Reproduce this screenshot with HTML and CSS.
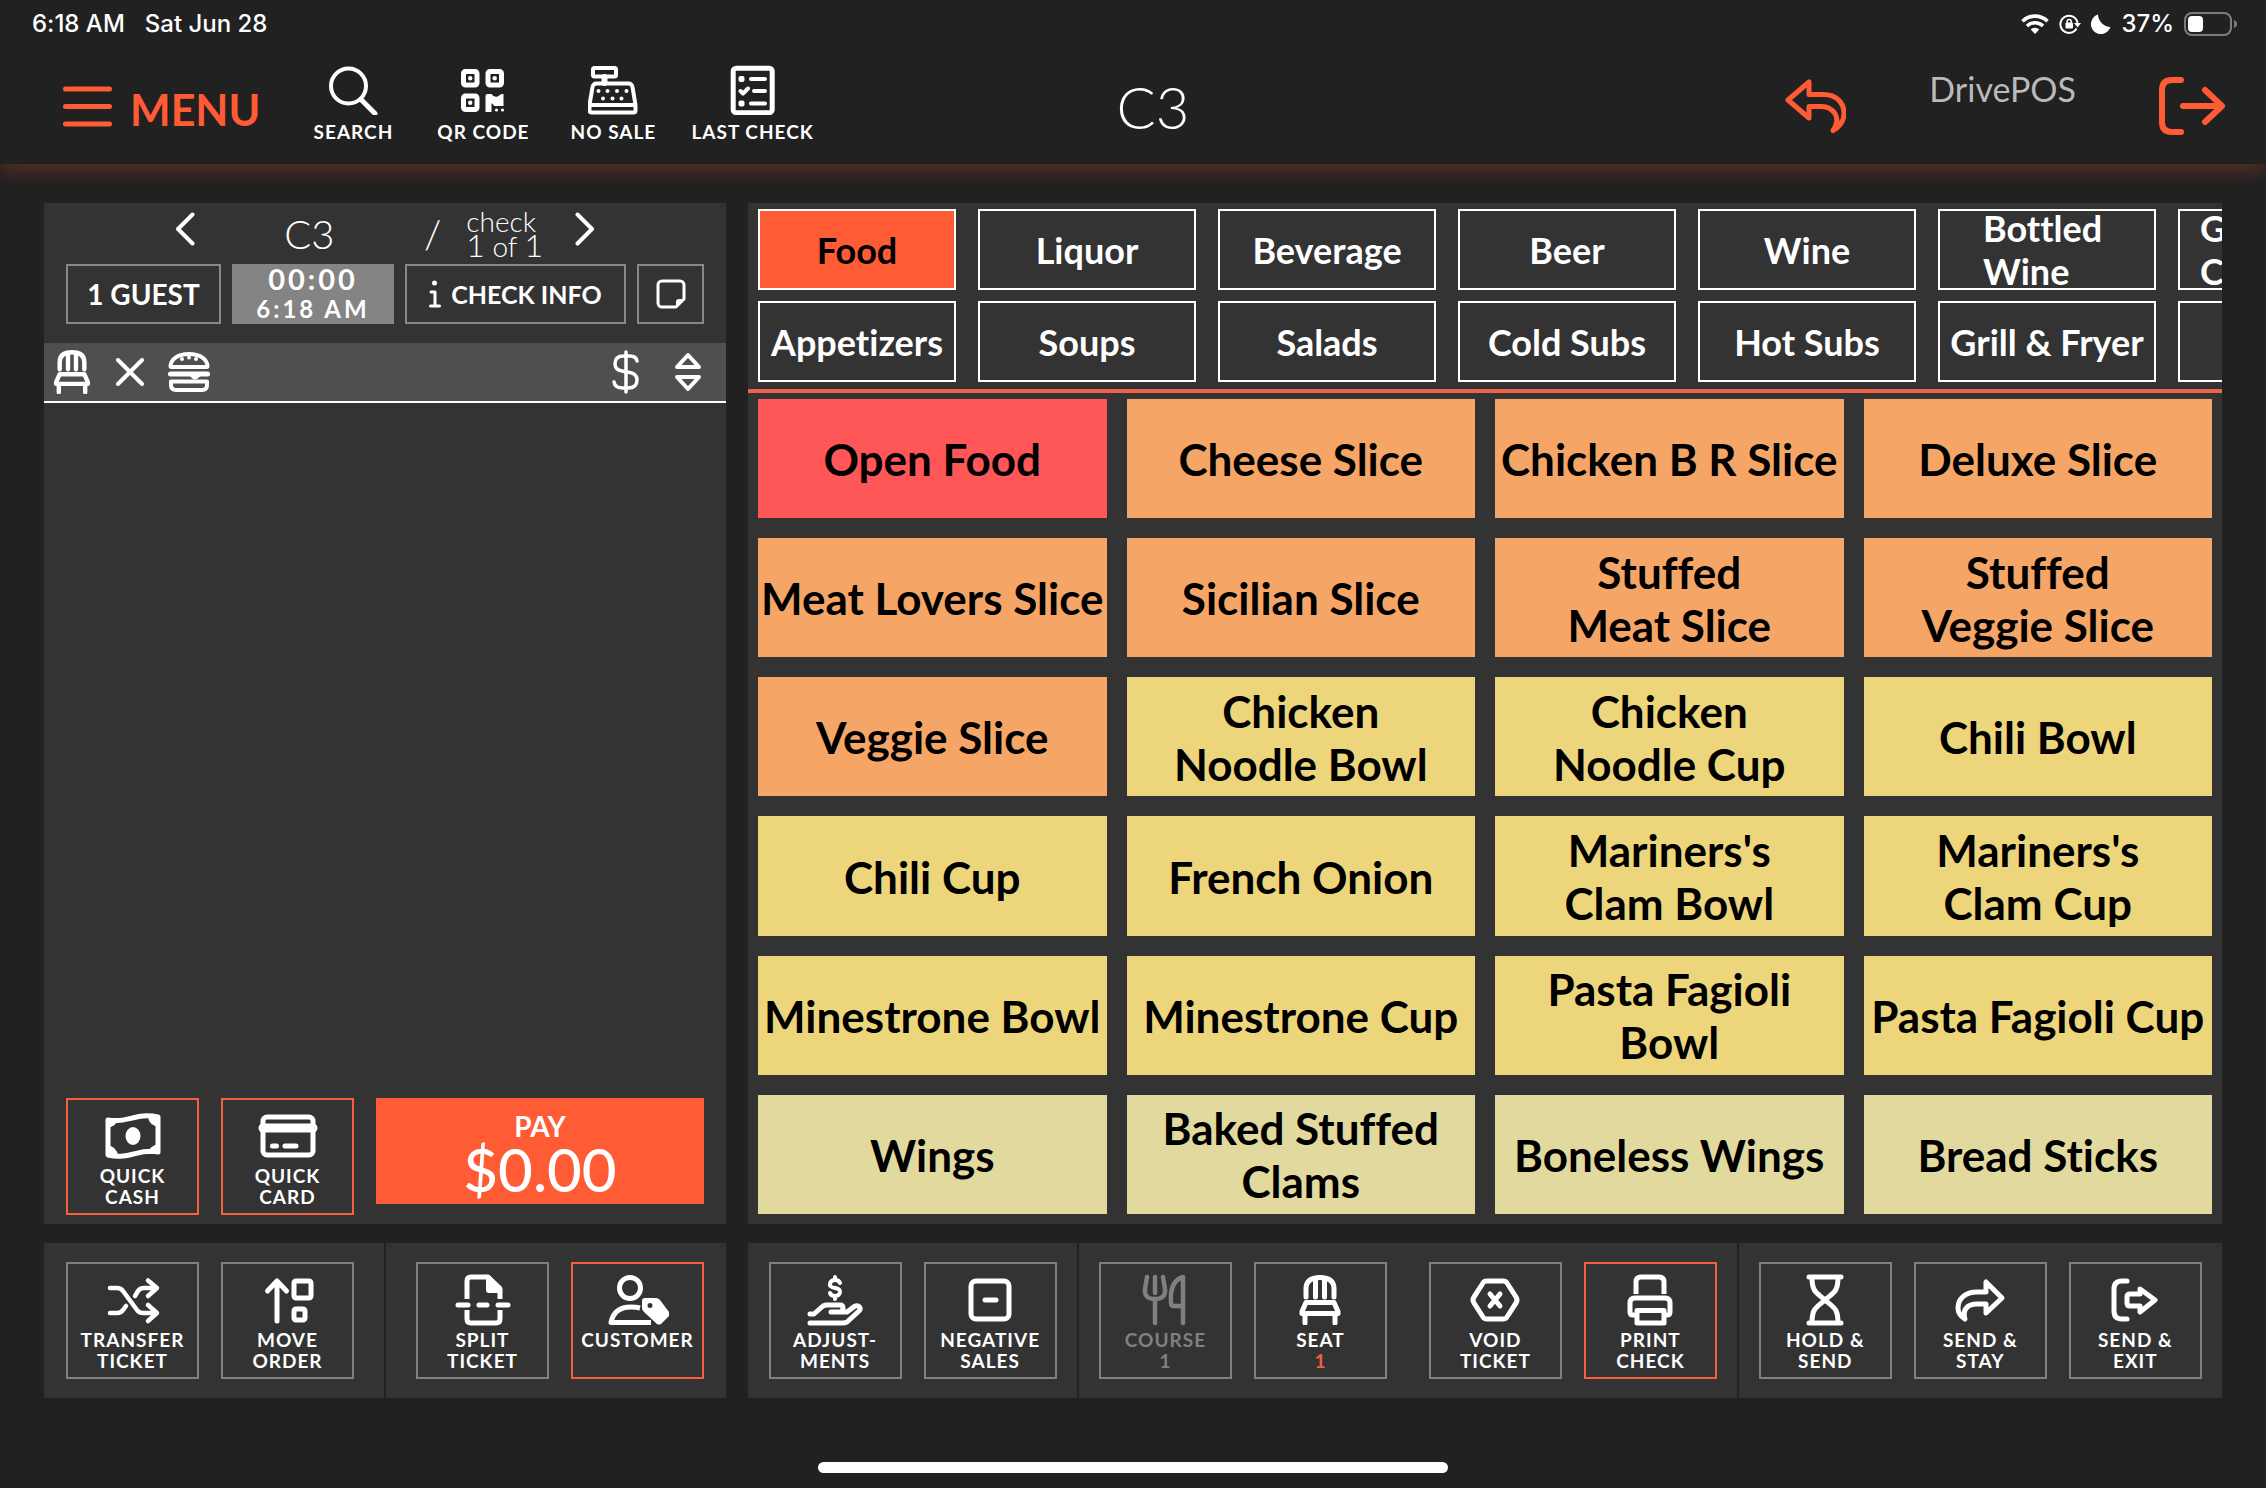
FILE: index.html
```html
<!DOCTYPE html>
<html lang="en">
<head>
  <meta charset="UTF-8">
  <meta name="viewport" content="width=device-width, initial-scale=1">
  <title>DrivePOS - C3</title>
  <link rel="stylesheet" href="styles.css">
</head>
<body>

  <!-- Shared icons -->
  <svg class="sprite" aria-hidden="true">
    <symbol id="icon-chair" viewBox="0 0 42 50">
      <path d="M7 22V14C7 6 12 2.500 21 2.500S35 6 35 14v8M16.500 4v18M25.500 4v18M7 27.500h28l4 9v2H3v-2zM6 38.500V48M36 38.500V48"/>
    </symbol>
  </svg>

  <div class="status-bar">
    <div class="status-left">
      <span>6:18 AM</span>
      <span>Sat Jun 28</span>
    </div>
    <div class="status-right">
      <svg width="28" height="20" viewBox="0 0 28 20" fill="none" stroke="#fff" stroke-width="3.600">
        <path d="M1.500 7.200a18 18 0 0 1 25 0M6 12a11.500 11.500 0 0 1 16 0"/>
        <path d="M14 20l-4.200-4.500a6 6 0 0 1 8.400 0z" fill="#fff" stroke="none"/>
      </svg>
      <svg width="22" height="20" viewBox="0 0 22 20" fill="none" stroke="#fff" stroke-width="2">
        <path d="M17.500 14.500A8.600 8.600 0 1 1 18.500 9"/>
        <path d="M15 9h7l-3.500 4.500z" fill="#fff" stroke="none"/>
        <rect x="6.500" y="8.500" width="7.500" height="6" rx="1" fill="#fff" stroke="none"/>
        <path d="M8.200 9V7.500a2 2 0 0 1 4 0V9" stroke-width="1.500"/>
      </svg>
      <svg width="20" height="20" viewBox="0 0 20 20" fill="#fff">
        <path d="M7 .5A13 13 0 0 0 19.500 13 10 10 0 1 1 7 .5z"/>
      </svg>
      <span>37%</span>
      <svg width="54" height="24" viewBox="0 0 54 24" fill="none">
        <rect x="1" y="1" width="46" height="22" rx="7" stroke="#7d7d7d" stroke-width="2"/>
        <rect x="4" y="4" width="15" height="16" rx="4" fill="#fff"/>
        <path d="M50 8c4 1.500 4 6.500 0 8z" fill="#7d7d7d"/>
      </svg>
    </div>
  </div>

  <header class="top-bar">
    <nav class="top-left">
      <button class="menu-btn">
        <svg width="49" height="41" viewBox="0 0 49 41" stroke="#ff5c35" stroke-width="5" stroke-linecap="round">
          <path d="M2.500 3h44M2.500 20.500h44M2.500 38h44"/>
        </svg>
        <span>MENU</span>
      </button>
      <button class="nav-btn">
        <svg class="icon" width="50" height="50" viewBox="0 0 50 50">
          <circle cx="20.500" cy="21" r="17.500" stroke-width="4"/><path d="M33 34.500l14 14" stroke-width="5"/>
        </svg>
        SEARCH
      </button>
      <button class="nav-btn">
        <svg class="icon" width="50" height="50" viewBox="0 0 50 50">
          <rect x="5.500" y="6.500" width="13.500" height="13.500" rx="2"/>
          <rect x="30" y="6.500" width="13.500" height="13.500" rx="2"/>
          <rect x="5.500" y="31" width="13.500" height="13.500" rx="2"/>
          <g class="solid">
            <circle cx="12.200" cy="13.200" r="2.200"/><circle cx="36.700" cy="13.200" r="2.200"/><circle cx="12.200" cy="37.700" r="2.200"/>
            <path d="M27.500 31a2 2 0 0 1 2-2h4q2 3.500 6 2.500l4-2.500h2v12h-9l-3-3v9h-6z"/>
            <circle cx="38.500" cy="45" r="1.600"/><circle cx="44.500" cy="45" r="1.600"/>
          </g>
        </svg>
        QR CODE
      </button>
      <button class="nav-btn">
        <svg class="icon medium" width="50" height="50" viewBox="0 0 50 50">
          <rect x="5" y="3" width="23" height="8.500" rx="1.500"/>
          <path d="M16.500 12v6" stroke-width="6"/>
          <path d="M8.500 18.500h32a4 4 0 0 1 4 3.500l3 18v5.500a2 2 0 0 1-2 2h-42a2 2 0 0 1-2-2V40l3-18a4 4 0 0 1 4-3.500zM2 40h45"/>
          <g class="solid">
            <circle cx="10.500" cy="26" r="2"/><circle cx="19.500" cy="26" r="2"/><circle cx="29" cy="26" r="2"/><circle cx="38.500" cy="26" r="2"/>
            <circle cx="15" cy="33.500" r="2"/><circle cx="24.500" cy="33.500" r="2"/><circle cx="33.500" cy="33.500" r="2"/>
          </g>
        </svg>
        NO SALE
      </button>
      <button class="nav-btn">
        <svg class="icon" width="50" height="50" viewBox="0 0 50 50">
          <rect x="5.200" y="3.200" width="39" height="44.500" rx="3"/>
          <path d="M23 14h14M26 26h11M23 38.500h14M12.500 26l2.500 2.500 5-5" stroke-width="4"/>
          <rect class="solid" x="10.500" y="11" width="6" height="6" rx="2"/>
          <rect class="solid" x="10.500" y="35.500" width="6" height="6" rx="2"/>
        </svg>
        LAST CHECK
      </button>
    </nav>

    <h1 class="table-title">C3</h1>

    <div class="top-right">
      <button class="plain-btn" aria-label="Undo">
        <svg width="61" height="54" viewBox="0 0 61 54" fill="none" stroke="#ff5c35" stroke-width="5" stroke-linejoin="round" stroke-linecap="round">
          <path d="M3 21L24 3v12.500h15c12 0 20 8 20 19 0 7-4 13-11 17 4-6 5-12 2-17-3-4-7-7-13-7H24V39z"/>
        </svg>
      </button>
      <span class="brand">DrivePOS</span>
      <button class="plain-btn" aria-label="Exit">
        <svg width="66" height="58" viewBox="0 0 66 58" fill="none" stroke="#ff5c35" stroke-width="6" stroke-linejoin="round" stroke-linecap="round">
          <path d="M22 3H13Q3 3 3 13v32q0 10 10 10h9M24 29h38M46 13l17 16-17 16"/>
        </svg>
      </button>
    </div>
  </header>

  <main class="workspace">

    <!-- Current check -->
    <section class="panel check-panel">
      <div class="check-nav">
        <button class="plain-btn chevron" aria-label="Previous check">
          <svg width="20" height="34" viewBox="0 0 20 34" class="icon"><path d="M17.500 2.500L3 17l14.500 14.500" stroke-width="4"/></svg>
        </button>
        <span class="check-name">C3</span>
        <span class="slash">/</span>
        <span class="check-count">check<br><b>1</b> of <b>1</b></span>
        <button class="plain-btn chevron" aria-label="Next check">
          <svg width="20" height="34" viewBox="0 0 20 34" class="icon"><path d="M2.500 2.500L17 17 2.500 31.500" stroke-width="4"/></svg>
        </button>
      </div>

      <div class="check-actions">
        <button class="outline-btn guests">1 GUEST</button>
        <button class="outline-btn timer"><span class="elapsed">00:00</span><span class="opened">6:18 AM</span></button>
        <button class="outline-btn info">
          <svg width="12" height="28" viewBox="0 0 12 28" class="icon"><path d="M2 12h4v14M1.500 26h9" stroke-width="3"/><circle class="solid" cx="5.500" cy="3" r="2.500"/></svg>
          CHECK INFO
        </button>
        <button class="outline-btn note" aria-label="Note">
          <svg width="30" height="30" viewBox="0 0 30 30" class="icon"><path d="M6 2h18a4 4 0 0 1 4 4v14l-8 8H6a4 4 0 0 1-4-4V6a4 4 0 0 1 4-4z" stroke-width="3"/><path class="solid" d="M20 29v-6q0-3 3-3h6z"/></svg>
        </button>
      </div>

      <div class="order-head">
        <svg width="40" height="44" class="icon"><use href="#icon-chair"/></svg>
        <svg width="28" height="28" viewBox="0 0 28 28" class="icon medium"><path d="M2 2l24 24M26 2L2 26"/></svg>
        <svg width="42" height="40" viewBox="0 0 42 40" class="icon medium">
          <path d="M2.500 14C3 7 10 2 21 2s18 5 18.500 12q0 1-1 1h-35q-1 0-1-1zM3 29.500h36V33q0 5-5 5H8q-5 0-5-5z"/>
          <path d="M2.500 22h37" stroke-width="5"/>
          <path class="solid" d="M19 22h16l-6 5q-2 1-4 0z"/>
          <g class="solid"><circle cx="14" cy="7" r="2"/><circle cx="21" cy="5.500" r="2"/><circle cx="28" cy="7" r="2"/></g>
        </svg>
        <svg width="28" height="44" viewBox="0 0 28 44" class="icon push"><path d="M14 2v40M25 11q-1-5-7-5h-6Q3 6 3 13.500 3 20 10 21l8 1.500q7 1.500 7 7.500 0 8-9 8h-5q-8 0-9-6" stroke-width="3.500"/></svg>
        <svg width="28" height="40" viewBox="0 0 28 40" class="icon"><path d="M14 3l11 12H3zM14 37L3 25h22z" stroke-width="4"/></svg>
      </div>

      <div class="order-list"></div>

      <div class="pay-row">
        <button class="tool active">
          <svg class="icon" width="62" height="54" viewBox="0 0 62 54">
            <path d="M6 11c19 4 28-8 50-3v35c-19-4-28 8-50 3z"/>
            <g class="solid">
              <ellipse cx="31" cy="27" rx="7.500" ry="9"/>
              <path d="M4 9h12q-1 9-12 10zM58 8H46q1 9 12 10zM4 47h12q-1-10-12-11zM58 45H46q1-9 12-10z"/>
            </g>
          </svg>
          <span class="label">QUICK<br>CASH</span>
        </button>
        <button class="tool active">
          <svg class="icon" width="62" height="54" viewBox="0 0 62 54">
            <rect x="6" y="8" width="50" height="38" rx="4"/>
            <path d="M6 19h50" stroke-width="9"/>
            <path d="M15.500 37h4M28 37h11"/>
          </svg>
          <span class="label">QUICK<br>CARD</span>
        </button>
        <button class="pay-btn"><span>PAY</span><span class="amount">$0.00</span></button>
      </div>
    </section>

    <!-- Menu -->
    <section class="panel menu-panel">
      <div class="categories">
        <button class="cat selected">Food</button>
        <button class="cat">Liquor</button>
        <button class="cat">Beverage</button>
        <button class="cat">Beer</button>
        <button class="cat">Wine</button>
        <button class="cat two-line">Bottled 
Wine</button>
        <button class="cat two-line cut">G
C</button>
        <button class="cat">Appetizers</button>
        <button class="cat">Soups</button>
        <button class="cat">Salads</button>
        <button class="cat">Cold Subs</button>
        <button class="cat">Hot Subs</button>
        <button class="cat">Grill &amp; Fryer</button>
        <button class="cat" aria-label="Next category"></button>
      </div>

      <div class="items">
        <button class="item red">Open Food</button>
        <button class="item orange">Cheese Slice</button>
        <button class="item orange">Chicken B R Slice</button>
        <button class="item orange">Deluxe Slice</button>
        <button class="item orange">Meat Lovers Slice</button>
        <button class="item orange">Sicilian Slice</button>
        <button class="item orange">Stuffed<br>Meat Slice</button>
        <button class="item orange">Stuffed<br>Veggie Slice</button>
        <button class="item orange">Veggie Slice</button>
        <button class="item yellow">Chicken<br>Noodle Bowl</button>
        <button class="item yellow">Chicken<br>Noodle Cup</button>
        <button class="item yellow">Chili Bowl</button>
        <button class="item yellow">Chili Cup</button>
        <button class="item yellow">French Onion</button>
        <button class="item yellow">Mariners's<br>Clam Bowl</button>
        <button class="item yellow">Mariners's<br>Clam Cup</button>
        <button class="item yellow">Minestrone Bowl</button>
        <button class="item yellow">Minestrone Cup</button>
        <button class="item yellow">Pasta Fagioli<br>Bowl</button>
        <button class="item yellow">Pasta Fagioli Cup</button>
        <button class="item khaki">Wings</button>
        <button class="item khaki">Baked Stuffed<br>Clams</button>
        <button class="item khaki">Boneless Wings</button>
        <button class="item khaki">Bread Sticks</button>
      </div>
    </section>

    <!-- Ticket tools -->
    <div class="tools ticket-tools">
      <div class="tool-group">
        <button class="tool">
          <svg class="icon" width="62" height="54" viewBox="0 0 62 54">
            <path d="M8 15h7q4 0 6 3l14 19q2 3 6 3h11M8 40h7q4 0 6-3l3-4M33 23l3-5q2-3 6-3h10M46 7.500l9 7.500-9 8M46 32l9 8-9 8" stroke-width="4.500"/>
          </svg>
          <span class="label">TRANSFER<br>TICKET</span>
        </button>
        <button class="tool">
          <svg class="icon" width="62" height="54" viewBox="0 0 62 54">
            <path d="M20 48V9M10.500 18L20 8l9.500 10"/><rect x="37" y="8" width="17" height="17" rx="2"/><rect x="37" y="36" width="11" height="11" rx="2"/>
          </svg>
          <span class="label">MOVE<br>ORDER</span>
        </button>
      </div>
      <div class="tool-group">
        <button class="tool">
          <svg class="icon" width="62" height="54" viewBox="0 0 62 54">
            <path class="butt" d="M15 26V8q0-4 4-4h17l12 12v10M15 37v9q0 4 4 4h25q4 0 4-4v-9"/>
            <path class="solid" d="M34 3h4l12 11v6H37q-3 0-3-3z"/>
            <path d="M6 32h10M27 32h8M46 32h10"/>
          </svg>
          <span class="label">SPLIT<br>TICKET</span>
        </button>
        <button class="tool active">
          <svg class="icon" width="62" height="54" viewBox="0 0 62 54">
            <circle cx="23" cy="15" r="10.500"/>
            <path class="butt" d="M33 35q-4-1-9-1Q7 34 4 49.500h40"/>
            <path fill="#fff" fill-rule="evenodd" stroke="none" d="M38 25h11q2 0 4 2l9 12q1 2 0 4l-8 8q-2 1-4 0L37 39q-2-2-2-4v-7q0-3 3-3zm5 5a2.500 2.500 0 1 0 0 5 2.500 2.500 0 0 0 0-5z"/>
          </svg>
          <span class="label">CUSTOMER</span>
        </button>
      </div>
    </div>

    <!-- Order tools -->
    <div class="tools order-tools">
      <div class="tool-group">
        <button class="tool">
          <svg class="icon" width="62" height="54" viewBox="0 0 62 54">
            <path d="M36 10q-1-3-5-3t-5 3.500 5 4.500 5 4.500-5 3.500-5-3M31 4v3M31 23v3" stroke-width="4"/>
            <path d="M6 41h4l9-8q2-1 4-1h13q3 0 3 3t-3 4h-9M36 39h7l8-6q3-1 4.500 1t-.500 4L43 49q-2 1-4 1H6"/>
          </svg>
          <span class="label">ADJUST-<br>MENTS</span>
        </button>
        <button class="tool">
          <svg class="icon" width="62" height="54" viewBox="0 0 62 54">
            <rect x="12" y="8" width="38" height="38" rx="5"/><path d="M26 27h11"/>
          </svg>
          <span class="label">NEGATIVE<br>SALES</span>
        </button>
      </div>
      <div class="tool-group wide">
        <div class="pair">
          <button class="tool" disabled>
            <svg class="icon" width="62" height="54" viewBox="0 0 62 54">
              <path d="M13 4l-2 12q-1 10 10 10t10-10L29 4M21 4v16M21 27v23M49 50V4C39 7 36 17 37 30q0 3 3 3h9" stroke-width="4.500"/>
            </svg>
            <span class="label">COURSE<br>1</span>
          </button>
          <button class="tool">
            <svg class="icon chair" width="62" height="54" viewBox="0 0 62 54"><use href="#icon-chair" x="10" y="2" width="42" height="50"/></svg>
            <span class="label">SEAT<br><span class="accent">1</span></span>
          </button>
        </div>
        <div class="pair">
          <button class="tool">
            <svg class="icon" width="62" height="54" viewBox="0 0 62 54">
              <path d="M23 8h16q3 0 4 2l9 14q2 3 0 6l-9 14q-1 2-4 2H23q-3 0-4-2l-9-14q-2-3 0-6l9-14q1-2 4-2zM26 21l10 12M36 21L26 33"/>
            </svg>
            <span class="label">VOID<br>TICKET</span>
          </button>
          <button class="tool active">
            <svg class="icon" width="62" height="54" viewBox="0 0 62 54">
              <path class="butt" d="M17 21V9q0-5 5-5h18q5 0 5 5v12"/>
              <path d="M17 42h-3q-3 0-3-3V30q0-5 5-5h30q5 0 5 5v9q0 3-3 3h-3M18 37.500h27V50H18z"/>
            </svg>
            <span class="label">PRINT<br>CHECK</span>
          </button>
        </div>
      </div>
      <div class="tool-group">
        <button class="tool">
          <svg class="icon" width="62" height="54" viewBox="0 0 62 54">
            <path d="M15 4h32M15 50h32M18 4c0 15 4 15 13 23 9-8 13-8 13-23M18 50c0-15 4-15 13-23 9 8 13 8 13 23"/>
          </svg>
          <span class="label">HOLD &amp;<br>SEND</span>
        </button>
        <button class="tool">
          <svg class="icon" width="62" height="54" viewBox="0 0 62 54">
            <path d="M53 25L37 9v10h-9C16 19 9 26 9 35c0 5 2 8 7 11-3-10 3-15 12-15h9v9z"/>
          </svg>
          <span class="label">SEND &amp;<br>STAY</span>
        </button>
        <button class="tool">
          <svg class="icon" width="62" height="54" viewBox="0 0 62 54">
            <path d="M23 8h-5q-8 0-8 8v22q0 8 8 8h5M26 21h10v-5l15 11-15 12v-6H26q-3 0-3-3v-6q0-3 3-3z"/>
          </svg>
          <span class="label">SEND &amp;<br>EXIT</span>
        </button>
      </div>
    </div>
  </main>

  <div class="home-bar"></div>

</body>
</html>
```
FILE: styles.css
```css
* {
  box-sizing: border-box;
}

body {
  margin: 0;
  min-height: 100vh;
  display: flex;
  flex-direction: column;
  background: #212121;
  color: #fff;
  font-family: Lato, "Open Sans", sans-serif;
  font-variant-ligatures: none;
}

button {
  font-family: inherit;
  font-variant-ligatures: inherit;
  color: inherit;
  background: none;
  border: none;
  border-radius: 0;
  padding: 0;
  margin: 0;
  cursor: pointer;
}

svg {
  display: block;
  flex-shrink: 0;
}

.sprite {
  position: absolute;
  width: 0;
  height: 0;
}

.icon {
  fill: none;
  stroke: currentColor;
  stroke-width: 5px;
  stroke-linecap: round;
  stroke-linejoin: round;
}

.icon.medium { stroke-width: 4px; }
.icon .butt { stroke-linecap: butt; }

.icon .solid,
.icon .solid * {
  fill: currentColor;
  stroke: none;
}

/* iPad status bar */
.status-bar {
  display: flex;
  justify-content: space-between;
  height: 48px;
  padding: 0 28px 0 32px;
  font-family: Inter, sans-serif;
  font-size: 24px;
  font-weight: 500;
  line-height: 48px;
}

.status-left {
  display: flex;
  gap: 20px;
}

.status-right {
  display: flex;
  align-items: center;
  gap: 10px;
}

/* Header */
.top-bar {
  display: grid;
  grid-template-columns: 1fr auto 1fr;
  align-items: center;
  height: 116px;
  padding: 0 23px 0 63px;
  box-shadow: 0 4px 20px rgba(255, 92, 53, 0.3);
  clip-path: inset(0 0 -40px 0);
}

.top-left {
  display: flex;
  align-items: center;
}

.menu-btn {
  display: flex;
  align-items: center;
  gap: 18px;
  margin-right: 28px;
  font-size: 43px;
  font-weight: 700;
  color: #ff5c35;
}

.menu-btn span {
  padding-top: 6px;
}

.nav-btn {
  display: flex;
  flex-direction: column;
  align-items: center;
  gap: 6px;
  min-width: 130px;
  padding: 0 13px 6px;
  font-size: 19px;
  font-weight: 700;
  line-height: 21px;
  letter-spacing: 1px;
  white-space: nowrap;
}

.table-title {
  margin: 0;
  font-size: 58px;
  font-weight: 300;
}

.top-right {
  display: flex;
  align-items: center;
  justify-content: flex-end;
  gap: 83px;
  padding-right: 18px;
}

.brand {
  padding-bottom: 36px;
  font-size: 34px;
  font-weight: 400;
  color: #bababa;
}

/* Workspace */
.workspace {
  flex: 1;
  display: grid;
  grid-template-columns: minmax(0, 682fr) minmax(0, 1474fr);
  grid-template-rows: 1fr auto;
  gap: 19px 22px;
  padding: 39px 44px 0;
}

.panel {
  display: flex;
  flex-direction: column;
  background: #333;
}

/* Check panel */
.check-nav {
  display: flex;
  align-items: center;
  justify-content: center;
  height: 61px;
  font-weight: 300;
}

.chevron {
  padding-bottom: 10px;
}

.check-name {
  width: 229px;
  font-size: 40px;
  text-align: center;
}

.slash {
  font-size: 40px;
}

.check-count {
  margin: 0 32px 0 25px;
  font-size: 28px;
  line-height: 23px;
}

.check-count b {
  font-size: 32px;
  font-weight: 300;
}

.check-actions {
  display: grid;
  grid-template-columns: 155fr 162fr 221fr 67fr;
  gap: 11px;
  padding: 0 22px;
}

.outline-btn {
  display: flex;
  align-items: center;
  justify-content: center;
  height: 60px;
  border: 2px solid #888;
  font-weight: 700;
  white-space: nowrap;
}

.guests {
  font-size: 28px;
}

.timer {
  flex-direction: column;
  background: #848484;
  border-color: #848484;
  letter-spacing: 3px;
  line-height: 30px;
}

.elapsed {
  font-size: 29px;
}

.opened {
  font-size: 24px;
}

.info {
  gap: 10px;
  font-size: 25px;
}

.order-head {
  display: flex;
  align-items: center;
  gap: 24px;
  height: 60px;
  margin-top: 19px;
  padding: 0 24px 0 8px;
  background: #4f4f4f;
  border-bottom: 2px solid #fff;
}

.push {
  margin-left: auto;
  margin-right: 10px;
}

.order-list {
  flex: 1;
}

.pay-row {
  display: flex;
  align-items: flex-start;
  gap: 22px;
  padding: 0 22px 9px;
}

.pay-btn {
  flex: 1;
  height: 106px;
  padding-top: 2px;
  background: #ff5c35;
  font-size: 28px;
  font-weight: 700;
  line-height: 34px;
}

.pay-btn span {
  display: block;
}

.pay-btn .amount {
  font-size: 60px;
  font-weight: 500;
  line-height: 52px;
}

/* Menu panel */
.categories {
  display: grid;
  grid-template-columns: 198px repeat(6, 218px);
  grid-auto-rows: 81px;
  gap: 11px 22px;
  padding: 6px 0 7px 10px;
  border-bottom: 4px solid #f0624a;
  overflow: hidden;
}

.cat {
  padding-top: 2px;
  border: 2px solid #fff;
  font-size: 36px;
  font-weight: 700;
  line-height: 43px;
  white-space: nowrap;
}

.cat.selected {
  background: #ff5c35;
  color: #000;
}

.cat.two-line {
  display: flex;
  align-items: center;
  justify-content: center;
  padding-top: 0;
  text-align: left;
  white-space: pre;
}

.cat.cut {
  justify-content: flex-start;
  padding-left: 20px;
}

.items {
  flex: 1;
  display: grid;
  grid-template-columns: repeat(4, minmax(0, 1fr));
  grid-auto-rows: 1fr;
  gap: 20px;
  padding: 6px 10px 10px;
}

.item {
  padding-top: 2px;
  color: #000;
  font-size: 44px;
  font-weight: 700;
  line-height: 53px;
  white-space: nowrap;
}

.red { background: #ff5757; }
.orange { background: #f5a667; }
.yellow { background: #edd57b; }
.khaki { background: #e2d99e; }

/* Bottom tools */
.tools {
  display: grid;
  gap: 2px;
}

.ticket-tools {
  grid-template-columns: 1fr 1fr;
}

.order-tools {
  grid-template-columns: 329fr 657fr 483fr;
}

.tool-group {
  display: flex;
  align-items: center;
  justify-content: center;
  gap: 22px;
  height: 155px;
  background: #333;
}

.ticket-tools .tool-group:first-child {
  justify-content: flex-start;
  padding-left: 22px;
}

.ticket-tools .tool-group:last-child {
  justify-content: flex-end;
  padding-right: 22px;
}

.tool-group.wide {
  gap: 42px;
}

.pair {
  display: flex;
  gap: 22px;
}

.tool {
  display: flex;
  flex-direction: column;
  align-items: center;
  gap: 2px;
  width: 133px;
  height: 117px;
  padding-top: 9px;
  border: 2px solid #808080;
  font-size: 19px;
  font-weight: 700;
  line-height: 21px;
  letter-spacing: 1px;
  text-align: center;
  white-space: nowrap;
}

.tool.active {
  border-color: #f4603f;
}

.tool:disabled {
  color: #808080;
}

.accent {
  color: #f4603f;
}

.home-bar {
  width: 28%;
  max-width: 630px;
  height: 11px;
  margin: 64px auto 15px;
  border-radius: 6px;
  background: #fff;
}
```
